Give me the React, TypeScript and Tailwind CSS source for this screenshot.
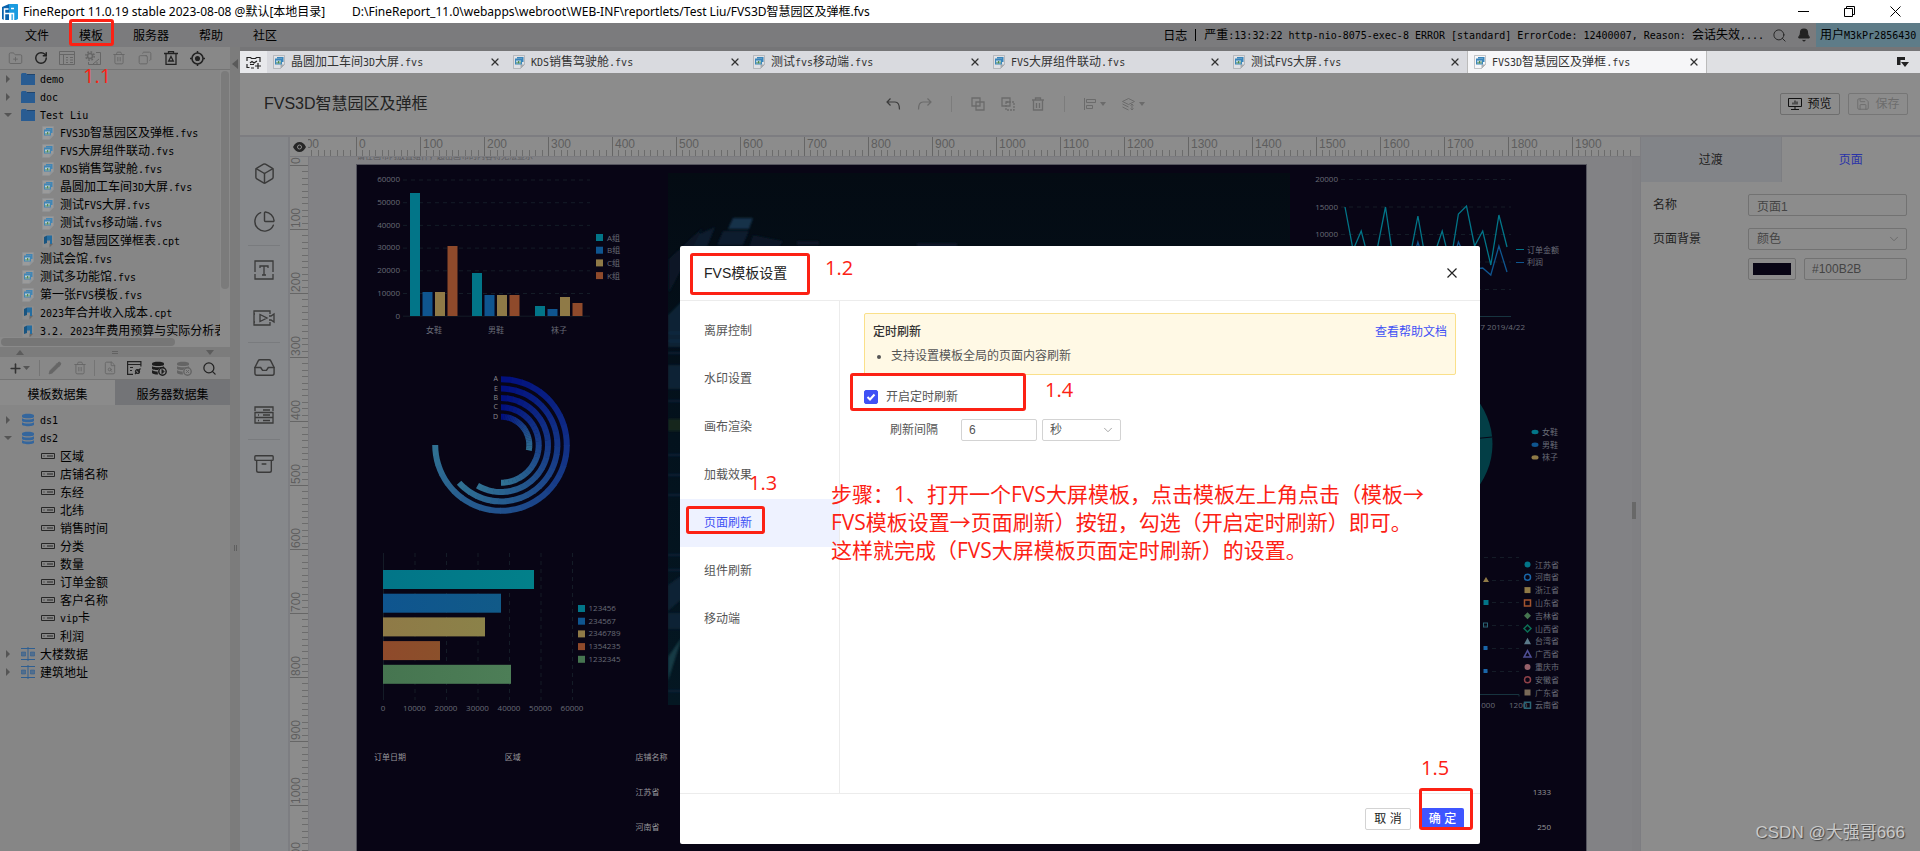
import { useState } from "react";
import type { ReactNode } from "react";
import {
  Archive,
  Bell,
  Box,
  ChevronDown,
  Copy,
  FileSearch,
  FolderPlus,
  Inbox,
  Pencil,
  PieChart,
  Plus,
  RotateCw,
  Save,
  Search,
  Trash2,
  X,
} from "lucide-react";

const SANS = "font-['Open_Sans','Noto_Sans_CJK_SC',sans-serif]";
const UI = "font-['Liberation_Sans','Noto_Sans_CJK_SC',sans-serif]";

/* Chinese text at 12px with fixed 6px latin columns, like the desktop shell */
function Song({ children }: { children: string }) {
  const runs = children.split(/([\x20-\x7e]+)/).filter(Boolean);
  return (
    <span className="whitespace-pre font-['Noto_Sans_CJK_SC',sans-serif] text-xs leading-4">
      {runs.map((run, i) =>
        /^[\x20-\x7e]/.test(run) ? (
          <span key={i} className="font-['DejaVu_Sans_Mono',monospace] text-[10px]">
            {run}
          </span>
        ) : (
          run
        ),
      )}
    </span>
  );
}

function FvsIcon() {
  return (
    <svg width="12" height="14" viewBox="0 0 12 14" className="shrink-0">
      <path d="M.5.5h11v9l-4 4h-7z" fill="#fff" fillOpacity=".2" stroke="#8f9498" strokeOpacity=".5" />
      <path d="M11.5 9.5h-4v4z" fill="#8f9498" fillOpacity=".7" />
      <path d="M4 2h6.500v5H9V3.500H4z" fill="#3a86bb" />
      <rect x="2" y="3.500" width="7" height="6" fill="#3a86bb" />
      <rect x="3" y="5.500" width="5" height="3" fill="#bcd3de" />
      <path d="M4 8.500V7M5.500 8.500V6M7 8.500V6.500" stroke="#4f8a4a" />
    </svg>
  );
}

function CptIcon() {
  return (
    <svg width="12" height="14" viewBox="0 0 12 14" className="shrink-0">
      <path d="M.5.5h11v9l-4 4h-7z" fill="#8f8f8f" />
      <path d="M11.500 9.500h-4v4z" fill="#666" />
      <path d="M2 3l3-1.500V9L2 10z" fill="#0d4f80" />
      <path d="M5 1.500h5V10H8V6.500H5z" fill="#1a6ba3" />
    </svg>
  );
}

function FolderIcon() {
  return (
    <svg width="14" height="12" viewBox="0 0 14 12" className="shrink-0">
      <path d="M0 1.500Q0 0 1.500 0H5l1 1.500h8V12H0z" fill="#1f5894" />
      <path d="M6 1.500h8" stroke="#163f6c" />
    </svg>
  );
}

function DbIcon({ fill = "#2c63a0" }: { fill?: string }) {
  return (
    <svg width="14" height="14" viewBox="0 0 14 14" className="shrink-0" fill={fill}>
      <path d="M1 2.500C1 .2 13 .2 13 2.500v1.200c0 2-12 2-12 0z" />
      <path d="M1 5.200c2 1.700 10 1.700 12 0v2.500c0 2-12 2-12 0z" />
      <path d="M1 9.200c2 1.700 10 1.700 12 0v2.300c0 2.300-12 2.300-12 0z" />
    </svg>
  );
}

/* database with a small round badge in its lower right corner */
function DbBadge({ fill, sign }: { fill: string; sign: string }) {
  return (
    <svg width="15" height="15" viewBox="0 0 15 15" fill={fill}>
      <path d="M0 2.500C0 0 12 0 12 2.500v1c0 2-12 2-12 0z" />
      <path d="M0 5.200c2 1.500 10 1.500 12 0V7H8L6 9C3 9 0 8.500 0 7.500z" />
      <path d="M0 9.200c1.500 1 4 1.200 5.500 1.200L6 13.500c-3 0-6-.5-6-2z" />
      <circle cx="10.500" cy="10.500" r="3.700" fill="none" stroke={fill} strokeWidth="1.400" />
      <path d={sign} stroke={fill} />
    </svg>
  );
}

function MultiIcon() {
  return (
    <svg width="14" height="14" viewBox="0 0 14 14" className="shrink-0" stroke="#255a93" fill="#255a93">
      <path d="M0 1.500h14M0 12.500h14M7 0v14" fill="none" />
      <path d="M.5 5h4v4h-4zM9.500 5h4v4h-4z" fillOpacity=".6" strokeOpacity=".6" />
    </svg>
  );
}

function FieldIcon() {
  return (
    <svg width="14" height="6" viewBox="0 0 14 6" className="shrink-0" fill="none" stroke="#1d1d1d">
      <path d="M.5.5h13v5H.5zM2.500 3h1M6 3h6" />
    </svg>
  );
}

const icons = { folder: FolderIcon, fvs: FvsIcon, cpt: CptIcon, db: DbIcon, multi: MultiIcon, field: FieldIcon };

type Row = { name: string; icon: keyof typeof icons; arrow?: "right" | "down"; child?: boolean };

const files: Row[] = [
  { name: "demo", icon: "folder", arrow: "right" },
  { name: "doc", icon: "folder", arrow: "right" },
  { name: "Test Liu", icon: "folder", arrow: "down" },
  { name: "FVS3D智慧园区及弹框.fvs", icon: "fvs", child: true },
  { name: "FVS大屏组件联动.fvs", icon: "fvs", child: true },
  { name: "KDS销售驾驶舱.fvs", icon: "fvs", child: true },
  { name: "晶圆加工车间3D大屏.fvs", icon: "fvs", child: true },
  { name: "测试FVS大屏.fvs", icon: "fvs", child: true },
  { name: "测试fvs移动端.fvs", icon: "fvs", child: true },
  { name: "3D智慧园区弹框表.cpt", icon: "cpt", child: true },
  { name: "测试会馆.fvs", icon: "fvs" },
  { name: "测试多功能馆.fvs", icon: "fvs" },
  { name: "第一张FVS模板.fvs", icon: "fvs" },
  { name: "2023年合并收入成本.cpt", icon: "cpt" },
  { name: "3.2. 2023年费用预算与实际分析表", icon: "cpt" },
];

const fields = ["区域", "店铺名称", "东经", "北纬", "销售时间", "分类", "数量", "订单金额", "客户名称", "vip卡", "利润"];

const datasets: Row[] = [
  { name: "ds1", icon: "db", arrow: "right" },
  { name: "ds2", icon: "db", arrow: "down" },
  ...fields.map((name): Row => ({ name, icon: "field", child: true })),
  { name: "大楼数据", icon: "multi", arrow: "right" },
  { name: "建筑地址", icon: "multi", arrow: "right" },
];

function Tree({ rows }: { rows: Row[] }) {
  return (
    <ul className="text-black">
      {rows.map((row) => {
        const Icon = icons[row.icon];
        return (
          <li key={row.name} className={`flex h-[18px] items-center ${row.child ? "pl-5" : ""}`}>
            <span className="flex w-5 shrink-0 pl-1">
              {row.arrow && (
                <svg width="8" height="8" viewBox="0 0 8 8" fill="#555">
                  <path d={row.arrow === "right" ? "M2 0l4 4-4 4z" : "M0 2h8L4 6z"} />
                </svg>
              )}
            </span>
            <span className="flex w-4 shrink-0 justify-center opacity-90">
              <Icon />
            </span>
            <span className="ml-1 flex">
              <Song>{row.name}</Song>
            </span>
          </li>
        );
      })}
    </ul>
  );
}

type ToolProps = { label: string; dim?: boolean; compact?: boolean; children: ReactNode };

function ToolButton({ label, dim, compact, children }: ToolProps) {
  return (
    <button
      type="button"
      aria-label={label}
      className={`flex shrink-0 justify-center ${compact ? "w-[25px]" : "w-[26px]"} ${dim ? "text-[#666]" : "text-[#222]"}`}
    >
      {children}
    </button>
  );
}

function Sidebar() {
  return (
    <aside className="flex w-[230px] shrink-0 flex-col bg-[#868686]">
      <div className="flex h-[23px] items-center border-b border-[#747474] bg-[#888] pl-0.5">
        <ToolButton label="新建文件夹" dim><FolderPlus size={15} strokeWidth={1.500} /></ToolButton>
        <ToolButton label="刷新"><RotateCw size={14} strokeWidth={2.500} /></ToolButton>
        <ToolButton label="目录" dim>
          <svg width="16" height="14" fill="none" stroke="currentColor"><path d="M.5.5h15v13H.5zM.5 3.500h15M4.500 3.500v10M7 6.500h2M7 9h2M7 11.500h2M11 6.500h3M11 9h3M11 11.500h3" /></svg>
        </ToolButton>
        <ToolButton label="设置" dim>
          <svg width="16" height="14" fill="none" stroke="currentColor">
            <circle cx="5" cy="5" r="2.500" strokeWidth="1.500" />
            <circle cx="5" cy="5" r="4.200" strokeDasharray="1.700 1.600" strokeWidth="1.500" />
            <path d="M11 1.500h4.500v12h-12V11M8 13l6-5M12 13.500V11" />
          </svg>
        </ToolButton>
        <ToolButton label="删除" dim><Trash2 size={14} strokeWidth={1.500} /></ToolButton>
        <ToolButton label="复制" dim><Copy size={14} strokeWidth={1.500} className="-scale-x-100" /></ToolButton>
        <ToolButton label="回收站">
          <svg width="14" height="14" fill="none" stroke="currentColor" strokeWidth="1.300">
            <path d="M0 2.500h14M4.500 2V.700h5V2M2 3v10.300h10V3M7 5.500l2.300 4.500H4.700z" />
          </svg>
        </ToolButton>
        <ToolButton label="定位">
          <svg width="15" height="15" fill="none" stroke="currentColor" strokeWidth="1.500">
            <circle cx="7.500" cy="7.500" r="5.500" />
            <circle cx="7.500" cy="7.500" r="1.800" fill="currentColor" />
            <path d="M7.500 0v2M7.500 13v2M0 7.500h2M13 7.500h2" />
          </svg>
        </ToolButton>
      </div>
      <div className="flex h-[267px] shrink-0">
        <div className="min-w-0 flex-1 overflow-hidden">
          <Tree rows={files} />
        </div>
        <div className="w-[10px] bg-[#8a8a8a]">
          <div className="ml-px mt-px h-[218px] w-2 rounded-full bg-[#7b7b7b]" />
        </div>
      </div>
      <div className="h-[10px] shrink-0 bg-[#8a8a8a] p-px">
        <div className="h-2 w-[174px] rounded-full bg-[#767676]" />
      </div>
      <div className="flex h-[10px] shrink-0 items-center justify-between bg-[#7c7c7c] px-4">
        <svg width="8" height="5" fill="#5c5c5c"><path d="M0 5h8L4 0z" /></svg>
        <span className="h-[3px] w-1.5 border-y border-[#626262]" />
        <svg width="8" height="5" fill="#5c5c5c"><path d="M0 0h8L4 5z" /></svg>
      </div>
      <div className="flex h-[23px] shrink-0 items-center border-b border-[#747474] bg-[#888] pl-2">
        <button type="button" aria-label="新建数据集" className="flex w-[31px] items-center text-[#333]">
          <Plus size={15} strokeWidth={2.500} />
          <svg width="7" height="4" fill="#555"><path d="M0 0h7L3.500 4z" /></svg>
        </button>
        <span className="mr-0.5 h-4 w-px bg-[#757575]" />
        <ToolButton compact label="编辑" dim><Pencil size={14} fill="#666" strokeWidth={1.500} /></ToolButton>
        <ToolButton compact label="删除数据集" dim><Trash2 size={14} strokeWidth={1.500} /></ToolButton>
        <span className="ml-0.5 mr-0.5 h-4 w-px bg-[#757575]" />
        <ToolButton compact label="预览数据" dim><FileSearch size={14} strokeWidth={1.500} /></ToolButton>
        <ToolButton compact label="连接">
          <svg width="15" height="14" fill="none" stroke="currentColor" strokeWidth="1.200">
            <path d="M6 13.400H.600V.600h13.300v5M.600 3.500h13.300M3 6.500h3M3 9.500h2M8 13l2-2M9.500 8.500l3 3M13.500 7.500l-2 2" />
            <circle cx="10.500" cy="10.500" r="2" />
          </svg>
        </ToolButton>
        <ToolButton compact label="数据库"><DbBadge fill="#1c1c1c" sign="M10 8.500v4l2-2z" /></ToolButton>
        <ToolButton compact label="清除数据库" dim><DbBadge fill="#646464" sign="M9 9l3 3M12 9l-3 3" /></ToolButton>
        <ToolButton compact label="搜索"><Search size={15} strokeWidth={2} /></ToolButton>
      </div>
      <div className="grid h-[25px] shrink-0 grid-cols-2 text-black">
        <button type="button" className="bg-[#8b8b8b]"><Song>模板数据集</Song></button>
        <button type="button" className="bg-[#737477]"><Song>服务器数据集</Song></button>
      </div>
      <div className="min-h-0 flex-1 overflow-hidden pt-1.5">
        <Tree rows={datasets} />
      </div>
    </aside>
  );
}

function TitleBar() {
  return (
    <header className="flex h-[23px] shrink-0 items-center bg-white font-['Noto_Sans','Noto_Sans_CJK_SC',sans-serif] text-xs text-black">
      <svg width="16" height="16" viewBox="0 0 16 16" className="ml-0.5 mr-[5px]">
        <path d="M0 3l7-3v16H2l-2-1z" fill="#0a63ad" />
        <path d="M7 0h8.500l.5.500V15l-2 1H9.500V9H7z" fill="#1a9be0" />
        <path d="M2.500 16V5h4M2.500 9.500h9V16M9 4.500h3" fill="none" stroke="#fff" strokeWidth="1.500" />
      </svg>
      <span className="w-[329px] whitespace-pre">FineReport 11.0.19 stable 2023-08-08 @默认[本地目录]</span>
      <span className="whitespace-pre">
        D:\FineReport_11.0\webapps\webroot\WEB-INF\reportlets/Test Liu/FVS3D智慧园区及弹框.fvs
      </span>
      <div className="ml-auto flex pr-[19px]">
        <button type="button" aria-label="最小化" className="flex w-[46px] justify-end">
          <svg width="11" height="11" stroke="#000"><path d="M0 5.500h11" /></svg>
        </button>
        <button type="button" aria-label="还原" className="flex w-[46px] justify-end">
          <svg width="11" height="11" stroke="#000" fill="none"><path d="M.5 2.500h8v8h-8zM2.500 2.500v-2h8v8h-2" /></svg>
        </button>
        <button type="button" aria-label="关闭" className="flex w-[46px] justify-end">
          <svg width="11" height="11" stroke="#000"><path d="M.5.500l10 10M10.500.500l-10 10" /></svg>
        </button>
      </div>
    </header>
  );
}

function MenuBar() {
  return (
    <nav className="flex h-6 shrink-0 items-center bg-[#7b7b7d] pl-[25px] text-black">
      <div className="flex gap-[30px]">
        {["文件", "模板", "服务器", "帮助", "社区"].map((name) => (
          <button key={name} type="button" className="flex">
            <Song>{name}</Song>
          </button>
        ))}
      </div>
      <div className="ml-auto flex h-full items-center">
        <Song>日志</Song>
        <span className="mx-2 h-3 w-px bg-black" />
        <Song>严重:13:32:22 http-nio-8075-exec-8 ERROR [standard] ErrorCode: 12400007, Reason: 会话失效,...</Song>
        <Search size={15} strokeWidth={1.500} className="ml-2 text-[#222]" />
        <Bell size={14} fill="#222" className="ml-2.5 mr-[5px] text-[#222]" />
        <span className="flex h-full w-[104px] items-center bg-[#5e7c88] pl-1">
          <Song>用户M3kPr2856430</Song>
        </span>
      </div>
    </nav>
  );
}

const tabs = [
  "晶圆加工车间3D大屏.fvs",
  "KDS销售驾驶舱.fvs",
  "测试fvs移动端.fvs",
  "FVS大屏组件联动.fvs",
  "测试FVS大屏.fvs",
  "FVS3D智慧园区及弹框.fvs",
];

function FileTabs() {
  return (
    <div className="flex h-[26px] shrink-0 border-t-4 border-[#757577] bg-[#dfe0e3]">
      <button type="button" aria-label="新建" className="flex w-[27px] shrink-0 items-center justify-center bg-[#e8e9ec]">
        <svg width="15" height="13" viewBox="0 0 15 13" fill="none" stroke="#222" strokeWidth="1.200">
          <path d="M3.500 11.500H1V8M1 5V1.500h3.500l1 1h4l1-1H14V6M4 7l2-1.500L8 7l3-2M5 12h3M9 10h6M12 7v6M4 8.500h4" />
        </svg>
      </button>
      {tabs.map((tab, i) => (
        <div
          key={tab}
          className={`flex w-[240px] min-w-0 items-center px-[6px] text-[#333] ${
            i === tabs.length - 1 ? "border-x border-[#bbb] bg-[#f6f6f8]" : "bg-[#d9dadf]"
          }`}
        >
          <FvsIcon />
          <span className="ml-[6px] flex min-w-0 flex-1 overflow-hidden">
            <Song>{tab}</Song>
          </span>
          <button type="button" aria-label={`关闭 ${tab}`}>
            <X size={12} strokeWidth={2.500} />
          </button>
        </div>
      ))}
      <svg width="12" height="11" viewBox="0 0 12 11" fill="#222" className="mb-auto ml-auto mr-[11px] mt-1.5">
        <path d="M0 0h8v3H3.500v5H0zM4 5h8l-4 5z" />
      </svg>
    </div>
  );
}

function Toolbar() {
  return (
    <div className={`flex h-16 shrink-0 items-center border-b-2 border-[#7d7d81] bg-[#8c8c8c] px-3 pl-6 ${UI}`}>
      <h1 className="w-[622px] text-base text-[#222]">FVS3D智慧园区及弹框</h1>
      <div className="flex items-center gap-4 text-[#6b6b6b]">
        <button type="button" aria-label="撤销" className="text-[#3c3c3c]">
          <svg width="15" height="12" fill="none" stroke="currentColor" strokeWidth="1.200"><path d="M4.500.500L1 4l3.500 3.500M1 4h8q4.500 0 4.500 7.500" /></svg>
        </button>
        <button type="button" aria-label="重做">
          <svg width="15" height="12" fill="none" stroke="currentColor" strokeWidth="1.200"><path d="M10.500.500L14 4l-3.500 3.500M14 4H6Q1.500 4 1.500 11.500" /></svg>
        </button>
        <span className="mx-[3px] h-4 w-px bg-[#7c7c7c]" />
        <button type="button" aria-label="组合">
          <svg width="14" height="14" fill="none" stroke="currentColor" strokeWidth="1.300"><path d="M1 1h8v8H1zM5 5h8v8H5z" /></svg>
        </button>
        <button type="button" aria-label="取消组合">
          <svg width="14" height="14" fill="none" stroke="currentColor" strokeWidth="1.300"><path d="M1 1h8v8H1zM5 5h4v4" /><path d="M5 5h8v8H5z" strokeDasharray="2 1" /></svg>
        </button>
        <button type="button" aria-label="删除">
          <svg width="14" height="14" fill="none" stroke="currentColor" strokeWidth="1.300"><path d="M1 3h12M4.500 2.500V1h5v1.500M2.500 3v10h9V3M5.500 6v5M8.500 6v5" /></svg>
        </button>
        <span className="mx-[3px] h-4 w-px bg-[#7c7c7c]" />
        <button type="button" aria-label="对齐" className="flex items-center gap-1">
          <svg width="12" height="12" fill="none" stroke="currentColor"><path d="M.5 0v12M2.500 1.500h9v3h-9zM2.500 7.500h6v3h-6z" /></svg>
          <svg width="6" height="4" fill="currentColor"><path d="M0 0h6L3 4z" /></svg>
        </button>
        <button type="button" aria-label="层级" className="flex items-center gap-1">
          <svg width="13" height="13" fill="none" stroke="currentColor"><path d="M6.500.500l6 3-6 3-6-3zM.5 6l6 3M.5 9l6 3M10 6v6M8.500 7.500L10 6l1.500 1.500M8.500 10.500L10 12l1.500-1.500" /></svg>
          <svg width="6" height="4" fill="currentColor"><path d="M0 0h6L3 4z" /></svg>
        </button>
      </div>
      <div className="flex flex-1 justify-end gap-2 text-xs">
        <button type="button" className="flex h-[22px] w-[60px] items-center justify-center gap-[5px] rounded-xs border border-[#6e6e6e] text-[#111]">
          <svg width="14" height="12" fill="none" stroke="currentColor"><path d="M.5.500h13v8H.5zM7 9v2.500M3 11.500h8M5 6.500v-2M7 6.500v-4M9 6.500v-3" /></svg>
          预览
        </button>
        <button type="button" className="flex h-[22px] w-[60px] items-center justify-center gap-[5px] rounded-xs border border-[#767676] text-[#6c6c6c]">
          <Save size={14} strokeWidth={1.500} />
          保存
        </button>
      </div>
    </div>
  );
}

function Palette() {
  const pairs = [
    [<Box size={23} strokeWidth={1.500} />, <PieChart size={23} strokeWidth={1.500} />],
    [
      <svg width="20" height="20" viewBox="0 0 20 20" fill="none" stroke="currentColor" strokeWidth="1.300">
        <path d="M1 14v5h18v-5M1 12V1h18v11M6 8V6h8v2M10 6v9M8 15h4" />
      </svg>,
      <svg width="22" height="16" viewBox="0 0 22 16" fill="none" stroke="currentColor" strokeWidth="1.300">
        <path d="M17 4V1H1v14h16v-3M1 4h1M1 12h1M7 4.500v7l7-3.500zM16 6h2l3-2v8l-3-2h-2" />
      </svg>,
    ],
    [
      <Inbox size={23} strokeWidth={1.500} />,
      <svg width="20" height="18" viewBox="0 0 20 18" fill="none" stroke="currentColor" strokeWidth="1.300">
        <path d="M1 5V1h18v4M9 4h7M1 6.500h18v5H1zM1 11.500h18V17H1zM4 9h1M9 9h7M4 14.500h1M9 14.500h7" />
      </svg>,
    ],
    [<Archive size={22} strokeWidth={1.500} />],
  ];
  const names = ["三维", "图表", "文本", "媒体", "容器", "表格", "收藏"];
  return (
    <div className="flex w-[50px] shrink-0 flex-col items-center border-r-2 border-[#7d7e82] bg-[#86888b] pt-3 text-[#3a3a3a]">
      {pairs.map((pair, i) => (
        <div key={i} className="flex w-8 flex-col border-b border-[#797b7e] last:border-b-0">
          {pair.map((icon, j) => (
            <button key={j} type="button" aria-label={names[i * 2 + j]} className="flex h-12 items-center justify-center">
              {icon}
            </button>
          ))}
        </div>
      ))}
    </div>
  );
}

const STEP = 64; // px per 100 units at the current zoom

function HorizontalRuler() {
  const majors = Array.from({ length: 21 }, (_, i) => i - 1);
  return (
    <svg height="19" className="w-full bg-[#8c8c8c]" fontSize="12" fill="#5e5e5e">
      {majors.map((n) => (
        <g key={n} transform={`translate(${48 + n * STEP} 0)`}>
          <rect width="1" height="19" fill="#666" />
          {n < 20 && <text x="3" y="11">{n * 100}</text>}
          {n < 20 &&
            Array.from({ length: 9 }, (_, k) => (
              <rect key={k} x={Math.round((k + 1) * 6.4)} y="13" width="1" height="6" fill="#6c6c6c" />
            ))}
        </g>
      ))}
    </svg>
  );
}

function VerticalRuler() {
  const majors = Array.from({ length: 12 }, (_, i) => i);
  return (
    <svg width="19" className="h-full shrink-0 border-r border-[#7b7b7f] bg-[#8c8c8c]" fontSize="12" fill="#5e5e5e">
      {majors.map((n) => (
        <g key={n} transform={`translate(0 ${8 + n * STEP})`}>
          <rect width="19" height="1" fill="#666" />
          <text transform="translate(10 -1) rotate(-90)">{n * 100}</text>
          {Array.from({ length: 9 }, (_, k) => (
            <rect key={k} x="12" y={Math.round((k + 1) * 6.4)} width="6" height="1" fill="#6c6c6c" />
          ))}
        </g>
      ))}
    </svg>
  );
}

const teal = "#027588";
const blue = "#0f558f";
const gold = "#8f7a47";
const rust = "#8f4a2b";
const green = "#467550";
const grid = "#141c27";

/* One widget on the dashboard; children draw in dashboard coordinates */
function Widget({ x, y, w, h, children }: { x: number; y: number; w: number; h: number; children: ReactNode }) {
  return (
    <svg
      className="absolute"
      style={{ left: x, top: y }}
      width={w}
      height={h}
      viewBox={`${x} ${y} ${w} ${h}`}
      fontSize="8"
      fill="#696c77"
    >
      {children}
    </svg>
  );
}

function GroupedBars() {
  const groups = [
    { name: "女鞋", x: 53, tops: [28, 127, 127, 81] },
    { name: "男鞋", x: 115, tops: [108, 130, 130, 130] },
    { name: "袜子", x: 178, tops: [141, 144, 132, 138] },
  ];
  const colors = [teal, blue, gold, rust];
  return (
    <Widget x={10} y={8} w={270} h={170}>
      {[60000, 50000, 40000, 30000, 20000, 10000, 0].map((v, i) => (
        <g key={v}>
          <text x="43" y={17 + i * 22.8} textAnchor="end">{v}</text>
          <path d={`M46 ${15 + i * 22.700}H233`} stroke={grid} strokeDasharray={v ? "4 4" : undefined} />
        </g>
      ))}
      {groups.map((g) => (
        <g key={g.name}>
          {g.tops.map((top, i) => (
            <rect key={i} x={g.x + i * 12.500} y={top} width="10" height={151 - top} fill={colors[i]} />
          ))}
          <text x={g.x + 24} y="168" textAnchor="middle">{g.name}</text>
        </g>
      ))}
      {["A组", "B组", "C组", "K组"].map((name, i) => (
        <g key={name}>
          <rect x="239" y={69 + i * 12.700} width="7" height="7" fill={colors[i]} />
          <text x="250" y={75.500 + i * 12.700}>{name}</text>
        </g>
      ))}
    </Widget>
  );
}

function RadialBars() {
  const rings = [
    { name: "A", r: 65.8, end: 270 },
    { name: "E", r: 56.4, end: 228 },
    { name: "B", r: 47, end: 210 },
    { name: "C", r: 37.700, end: 180 },
    { name: "D", r: 28.300, end: 101 },
  ];
  const cx = 144;
  const cy = 280;
  const point = (r: number, deg: number) => {
    const a = (deg * Math.PI) / 180;
    return `${(cx + r * Math.sin(a)).toFixed(2)} ${(cy - r * Math.cos(a)).toFixed(2)}`;
  };
  const parts = 30;
  return (
    <Widget x={70} y={205} w={150} h={150}>
      {rings.map((ring) => (
        <g key={ring.name} fill="none" strokeWidth="6">
          {Array.from({ length: parts }, (_, i) => {
            const t = i / (parts - 1);
            const from = (ring.end * i) / parts;
            const to = Math.min(ring.end, (ring.end * (i + 1)) / parts + 0.6);
            const color = `rgb(${2 + 46 * t} ${16 + 96 * t} ${126 + 20 * t})`;
            return <path key={i} d={`M${point(ring.r, from)}A${ring.r} ${ring.r} 0 0 1 ${point(ring.r, to)}`} stroke={color} />;
          })}
          <text x="141" y={cy - ring.r + 2} fontSize="7" fill="#8a8a90" stroke="none" textAnchor="end">{ring.name}</text>
        </g>
      ))}
    </Widget>
  );
}

function HorizontalBars() {
  const bars = [
    { name: "123456", w: 151, color: teal, to: "#02808a" },
    { name: "234567", w: 118, color: blue, to: "#115a88" },
    { name: "2346789", w: 102, color: gold, to: "#8b8249" },
    { name: "1354235", w: 57, color: rust, to: "#8b502b" },
    { name: "1232345", w: 128, color: green, to: "#4d7e57" },
  ];
  return (
    <Widget x={14} y={385} w={270} h={165}>
      {Array.from({ length: 7 }, (_, i) => (
        <g key={i}>
          <path d={`M${26.5 + i * 31.5} 388V535`} stroke={grid} strokeDasharray={i ? "4 4" : undefined} />
          <text x={26 + i * 31.500} y="546" textAnchor="middle">{i * 10000}</text>
        </g>
      ))}
      {bars.map((bar, i) => (
        <g key={bar.name}>
          <linearGradient id={`bar${i}`}>
            <stop stopColor={bar.color} />
            <stop offset="1" stopColor={bar.to} />
          </linearGradient>
          <rect x="26" y={405 + i * 23.700} width={bar.w} height="19" fill={`url(#bar${i})`} />
          <rect x="221" y={440 + i * 12.700} width="7" height="7" fill={bar.color} />
          <text x="231.500" y={446 + i * 12.700}>{bar.name}</text>
        </g>
      ))}
    </Widget>
  );
}

function LineChart() {
  const orders = [42, 85, 66, 97, 83, 42, 97, 95, 93, 51, 97, 90, 66, 99, 49, 41, 81, 66, 100, 50, 82];
  const profit = [100, 104, 99, 108, 100, 84, 104, 108, 106, 77, 104, 108, 100, 106, 77, 95, 104, 103, 110, 81, 107];
  const line = (ys: number[]) => ys.map((y, i) => `${(988 + i * 8.1).toFixed(1)},${y}`).join(" ");
  return (
    <Widget x={955} y={5} w={270} h={165}>
      {[20000, 15000, 10000, 5000, 0].map((v, i) => (
        <g key={v}>
          <text x="981" y={17 + i * 27.500} textAnchor="end">{v}</text>
          <path d={`M984 ${14.500 + i * 27.500}H1154`} stroke={grid} strokeDasharray="4 4" />
        </g>
      ))}
      <path d="M984 151.500H1154" stroke="#17343f" />
      <polyline points={line(orders)} fill="none" stroke={teal} strokeWidth="1.300" />
      <polyline points={line(profit)} fill="none" stroke={blue} strokeWidth="1.300" />
      <path d="M1159 84.500h8" stroke={teal} />
      <path d="M1159 97.500h8" stroke={blue} />
      <text x="1170" y="88">订单金额</text>
      <text x="1170" y="100">利润</text>
      <text x="1168" y="165" textAnchor="end">2019/4/17 2019/4/22</text>
    </Widget>
  );
}

function PieWidget() {
  const items = [["女鞋", teal], ["男鞋", blue], ["袜子", gold]];
  return (
    <Widget x={990} y={205} w={220} h={150}>
      <circle cx="1064" cy="279" r="71.500" fill="#033e46" />
      <path d="M1064 279L1135 272" stroke="#080515" />
      {items.map(([name, color], i) => (
        <g key={name}>
          <ellipse cx="1178" cy={267 + i * 12.700} rx="3.500" ry="2.200" fill={color} />
          <text x="1185" y={270 + i * 12.700}>{name}</text>
        </g>
      ))}
    </Widget>
  );
}

function ScatterChart() {
  const items = [
    ["江苏省", "circle", teal, true],
    ["河南省", "circle", "#1a66a8", false],
    ["浙江省", "square", gold, true],
    ["山东省", "square", "#a2542f", false],
    ["吉林省", "diamond", green, true],
    ["山西省", "diamond", "#0c6f55", false],
    ["台湾省", "triangle", "#5b7a8a", true],
    ["广西省", "triangle", "#4f4f96", false],
    ["重庆市", "circle", "#96606a", true],
    ["安徽省", "circle", "#8f4148", false],
    ["广东省", "square", "#7a6a58", true],
    ["云南省", "square", "#2a6474", false],
  ] as const;
  const shapes = {
    circle: "M-3 0a3 3 0 1 0 6 0a3 3 0 1 0-6 0z",
    square: "M-3-3h6v6h-6z",
    diamond: "M0-3.500L3.500 0 0 3.500-3.500 0z",
    triangle: "M0-3.500L3.500 3h-7z",
  };
  return (
    <Widget x={1110} y={385} w={110} h={165}>
      {[392.5, 415.5, 437.5, 460.5, 483.5, 506.5].map((y) => (
        <path key={y} d={`M1127 ${y}H1162`} stroke={grid} strokeDasharray="4 4" />
      ))}
      <path d="M1120 529.500h42v2" stroke="#17343f" fill="none" />
      <path d="M1129 412l3 5h-6z" fill={gold} />
      <rect x="1126.500" y="435" width="5" height="5" fill={teal} />
      <rect x="1126.500" y="458" width="4" height="4" fill="none" stroke="#2a6474" />
      <rect x="1126.500" y="481" width="4" height="4" fill="#1a66a8" />
      <rect x="1126.500" y="504" width="4" height="4" fill="#1a66a8" />
      <text x="1138" y="543" textAnchor="end">1000</text>
      <text x="1152" y="543">1200</text>
      {items.map(([name, shape, color, solid], i) => (
        <g key={name}>
          <path
            d={shapes[shape]}
            transform={`translate(1170.500 ${399.5 + i * 12.8})`}
            fill={solid ? color : "none"}
            stroke={color}
            strokeWidth={solid ? 0 : 1.5}
          />
          <text x="1178" y={402.500 + i * 12.800}>{name}</text>
        </g>
      ))}
    </Widget>
  );
}

function CityScene() {
  return (
    <Widget x={311} y={8} w={622} h={532}>
      <defs>
        <linearGradient id="night" x2="0" y2="1">
          <stop stopColor="#040b13" />
          <stop offset=".5" stopColor="#03121d" />
          <stop offset="1" stopColor="#041722" />
        </linearGradient>
        <filter id="soft"><feGaussianBlur stdDeviation="1.200" /></filter>
      </defs>
      <rect x="311" y="8" width="622" height="532" fill="url(#night)" />
      <g filter="url(#soft)">
        <path d="M376 53h20l-4 11h-21z" fill="#14304a" />
        <path d="M366 66h26l-6 14h-26zM340 70l18-8-8 20h-14z" fill="#0a1c2d" />
        <path d="M346 62l-34 66v-34zM396 70l30 6-4 6h-30zM440 76h22v4h-22zM560 78h40v4h-40z" fill="#081726" />
        <path d="M311 150l14-14v46h-14zM311 200h14v24h-14zM311 420l14-10v24l-14 12zM311 448h14v16h-14z" fill="#0b2135" />
        <path d="M311 254h14v12h-14z" fill="#15261f" />
        <path d="M325 472l-14 44v-24z" fill="#173a44" />
        <path d="M311 168h14M311 176h14M311 188h14M311 236h14M311 290h14M311 310h14M311 330h14M311 390h14M311 405h14M311 526h14" stroke="#0e3355" />
      </g>
    </Widget>
  );
}

const tableColumns = ["订单日期", "区域", "店铺名称", "", "", "", "", "", ""];
const tableRows = [["江苏省", "1333"], ["河南省", "250"]];

function Dashboard() {
  return (
    <div className={`relative ml-12 mt-2 h-[900px] w-[1229px] bg-[#080515] outline outline-[#55555e] ${SANS}`}>
      <GroupedBars />
      <RadialBars />
      <HorizontalBars />
      <CityScene />
      <LineChart />
      <PieWidget />
      <ScatterChart />
      <table className="absolute left-[17px] top-[574px] w-[1177px] table-fixed text-left text-[8px] leading-3 text-[#98989c]">
        <thead>
          <tr className="h-[35px]">
            {tableColumns.map((name, i) => (
              <th key={i} className="font-normal">{name}</th>
            ))}
          </tr>
        </thead>
        <tbody>
          {tableRows.map(([region, amount]) => (
            <tr key={region} className="h-[35px]">
              <td colSpan={2} />
              <td>{region}</td>
              <td colSpan={5} />
              <td className="text-right">{amount}</td>
            </tr>
          ))}
        </tbody>
      </table>
    </div>
  );
}

function Workspace() {
  return (
    <div className={`flex min-w-0 flex-1 flex-col bg-[#828285] ${UI}`}>
      <div className="flex h-5 shrink-0 border-b border-[#7b7b7f]">
        <div className="flex w-[18px] shrink-0 items-center justify-center bg-[#8c8c8c]">
          <svg width="13" height="10" viewBox="0 0 13 10" fill="#262626">
            <path d="M0 5Q2.500 0 6.500 0T13 5Q10.500 10 6.500 10T0 5z" />
            <circle cx="6.500" cy="5" r="2" fill="none" stroke="#8c8c8c" />
          </svg>
        </div>
        <div className="min-w-0 flex-1 overflow-hidden">
          <HorizontalRuler />
        </div>
      </div>
      <div className="flex min-h-0 flex-1">
        <VerticalRuler />
        <div className="relative min-w-0 flex-1 overflow-hidden">
          <p className="absolute -top-1.5 left-12 whitespace-nowrap text-[8px] leading-3 text-[#5c5c60]">
            请在画布内放置组件，超出画布的内容将无法显示
          </p>
          <Dashboard />
        </div>
        <div className="flex w-2 items-center bg-[#808083] pt-3">
          <div className="h-[17px] w-1 bg-[#686868]" />
        </div>
      </div>
    </div>
  );
}

function Properties() {
  const box = "h-[22px] min-w-0 rounded-xs border border-[#727272] bg-transparent text-[#444]";
  return (
    <aside className={`w-[280px] shrink-0 border-l border-[#7d7d81] bg-[#8c8c8c] text-xs text-[#222] ${UI}`}>
      <div className="grid h-[45px] grid-cols-2">
        <button type="button" className="bg-[#828488]">过渡</button>
        <button type="button" className="border-l border-[#7d7e82] text-[#2a33a8]">页面</button>
      </div>
      <div className="grid grid-cols-[95px_1fr] items-center gap-y-3 py-3 pl-3 pr-[13px]">
        <label htmlFor="page-name">名称</label>
        <input id="page-name" className={`${box} px-2`} defaultValue="页面1" />
        <label htmlFor="page-bg">页面背景</label>
        <div className="relative flex">
          <select id="page-bg" className={`${box} flex-1 appearance-none px-2`}>
            <option>颜色</option>
          </select>
          <ChevronDown size={14} strokeWidth={1.500} className="pointer-events-none absolute right-1.5 top-1 text-[#666]" />
        </div>
        <span />
        <div className="-mt-1 flex gap-2">
          <button type="button" aria-label="选择颜色" className={`${box} w-12 p-1`}>
            <span className="block h-full bg-[#080515]" />
          </button>
          <input aria-label="颜色值" className={`${box} w-0 flex-1 px-[7px]`} defaultValue="#100B2B" />
        </div>
      </div>
    </aside>
  );
}

const sections = ["离屏控制", "水印设置", "画布渲染", "加载效果", "页面刷新", "组件刷新", "移动端"];

const frame = "pointer-events-none absolute rounded-[3px] border-3 border-[#fc2114]";
const mark = `pointer-events-none absolute whitespace-nowrap text-xl leading-7 text-[#fc2114] ${SANS}`;

function SettingsDialog() {
  const [active, setActive] = useState("页面刷新");
  const [enabled, setEnabled] = useState(true);

  return (
    <div
      role="dialog"
      aria-label="FVS模板设置"
      className={`absolute inset-x-0 top-[173px] mx-auto flex h-[598px] w-[800px] flex-col rounded-xs bg-white text-xs text-[#555] ${UI}`}
    >
      <div className="flex h-[55px] shrink-0 items-center justify-between border-b border-[#ececec] px-6">
        <h2 className="text-sm text-[#222]">FVS模板设置</h2>
        <button type="button" aria-label="关闭" className="-mr-px">
          <svg width="10" height="10" stroke="#222" strokeWidth="1.200"><path d="M.5.500l9 9M9.500.500l-9 9" /></svg>
        </button>
      </div>
      <div className="flex min-h-0 flex-1">
        <div className="flex w-[160px] flex-col border-r border-[#ececec] pt-1.5">
          {sections.map((name) => (
            <button
              key={name}
              type="button"
              onClick={() => setActive(name)}
              className={`h-12 pl-6 text-left ${name === active ? "bg-[#eef2ff] text-[#3f51f5]" : ""}`}
            >
              {name}
            </button>
          ))}
        </div>
        <div className="flex-1 px-6 pt-3">
          <div className="h-[62px] rounded-xs border border-[#fae08a] bg-[#fff9e5] px-2 pt-2.5">
            <div className="flex justify-between leading-4">
              <b className="font-medium text-[#333]">定时刷新</b>
              <a href="#help" className="text-[#3f51f5]">查看帮助文档</a>
            </div>
            <ul className="mt-2 list-disc pl-[18px] leading-4">
              <li>支持设置模板全局的页面内容刷新</li>
            </ul>
          </div>
          <label className="mt-3.5 flex h-4 items-center gap-2">
            <span className="relative flex">
              <input
                type="checkbox"
                checked={enabled}
                onChange={(e) => setEnabled(e.target.checked)}
                className="h-3.5 w-3.5 appearance-none rounded-xs border border-[#3f51f5] checked:bg-[#3f51f5]"
              />
              <svg viewBox="0 0 14 14" className="pointer-events-none absolute inset-0" fill="none" stroke="#fff" strokeWidth="2">
                <path d="M3.500 7l2.500 2.500 4.500-5" />
              </svg>
            </span>
            开启定时刷新
          </label>
          <div className="mt-3.5 flex items-center pl-[26px]">
            <label htmlFor="interval" className="w-[71px]">刷新间隔</label>
            <input id="interval" defaultValue="6" className="h-[22px] w-[76px] rounded-xs border border-[#d3d3d3] px-[7px]" />
            <div className="relative ml-[5px]">
              <select aria-label="单位" className="block h-[22px] w-[79px] appearance-none rounded-xs border border-[#d3d3d3] px-[7px]">
                <option>秒</option>
              </select>
              <ChevronDown size={14} strokeWidth={1.500} className="pointer-events-none absolute right-1.5 top-1 text-[#999]" />
            </div>
          </div>
        </div>
      </div>
      <div className="flex h-[51px] shrink-0 items-start justify-end gap-2.5 border-t border-[#ececec] pr-4 pt-3.5">
        <button type="button" className="h-[22px] w-[46px] rounded-xs border border-[#d3d3d3] text-[#222]">取 消</button>
        <button type="button" className="h-[22px] w-[43px] rounded-xs bg-[#3f55ff] font-medium text-white">确 定</button>
      </div>

      <div className={`${frame} left-2.5 top-[7px] h-[42px] w-[120px]`} />
      <span className={`${mark} left-[145px] top-2`}>1.2</span>
      <div className={`${frame} left-1.5 top-[260px] h-7 w-[79px]`} />
      <span className={`${mark} left-[69px] top-[223px]`}>1.3</span>
      <div className={`${frame} left-[170px] top-[127px] h-[38px] w-[176px]`} />
      <span className={`${mark} left-[365px] top-[130px]`}>1.4</span>
      <p className={`pointer-events-none absolute left-[151px] top-[234px] whitespace-nowrap text-[21px] leading-7 text-[#fc2114] ${SANS}`}>
        步骤：1、打开一个FVS大屏模板，点击模板左上角点击（模板→
        <br />
        FVS模板设置→页面刷新）按钮，勾选（开启定时刷新）即可。
        <br />
        这样就完成（FVS大屏模板页面定时刷新）的设置。
      </p>
      <div className={`${frame} left-[739px] top-[542px] h-[42px] w-[54px]`} />
      <span className={`${mark} left-[741px] top-[508px]`}>1.5</span>
    </div>
  );
}

export default function App() {
  return (
    <div lang="zh-CN" className="relative flex h-screen flex-col overflow-hidden bg-[#868686]">
      <TitleBar />
      <MenuBar />
      <div className="flex min-h-0 flex-1">
        <Sidebar />
        <div className="flex w-2.5 shrink-0 flex-col items-center justify-between bg-[#7c7c7c] pt-3">
          <svg width="6" height="10" fill="#5a5a5a"><path d="M6 0v10L0 5z" /></svg>
          <span className="mt-44 h-1.5 w-[3px] border-x border-[#5f5f5f]" />
          <span />
        </div>
        <main className="flex min-w-0 flex-1 flex-col">
          <FileTabs />
          <div className="relative flex min-h-0 flex-1 flex-col">
            <Toolbar />
            <div className="flex min-h-0 flex-1">
              <Palette />
              <Workspace />
              <Properties />
            </div>
            <SettingsDialog />
          </div>
        </main>
      </div>
      <div className={`${frame} left-[69px] top-[19px] h-[27px] w-[45px]`} />
      <span className={`${mark} left-[83px] top-[62px]`}>1.1</span>
      <span className={`pointer-events-none absolute bottom-1.5 right-[15px] text-[17px] leading-6 text-[#c9c9c9] text-shadow-[1px_1px_1px_#444] ${UI}`}>
        CSDN @大强哥666
      </span>
    </div>
  );
}
